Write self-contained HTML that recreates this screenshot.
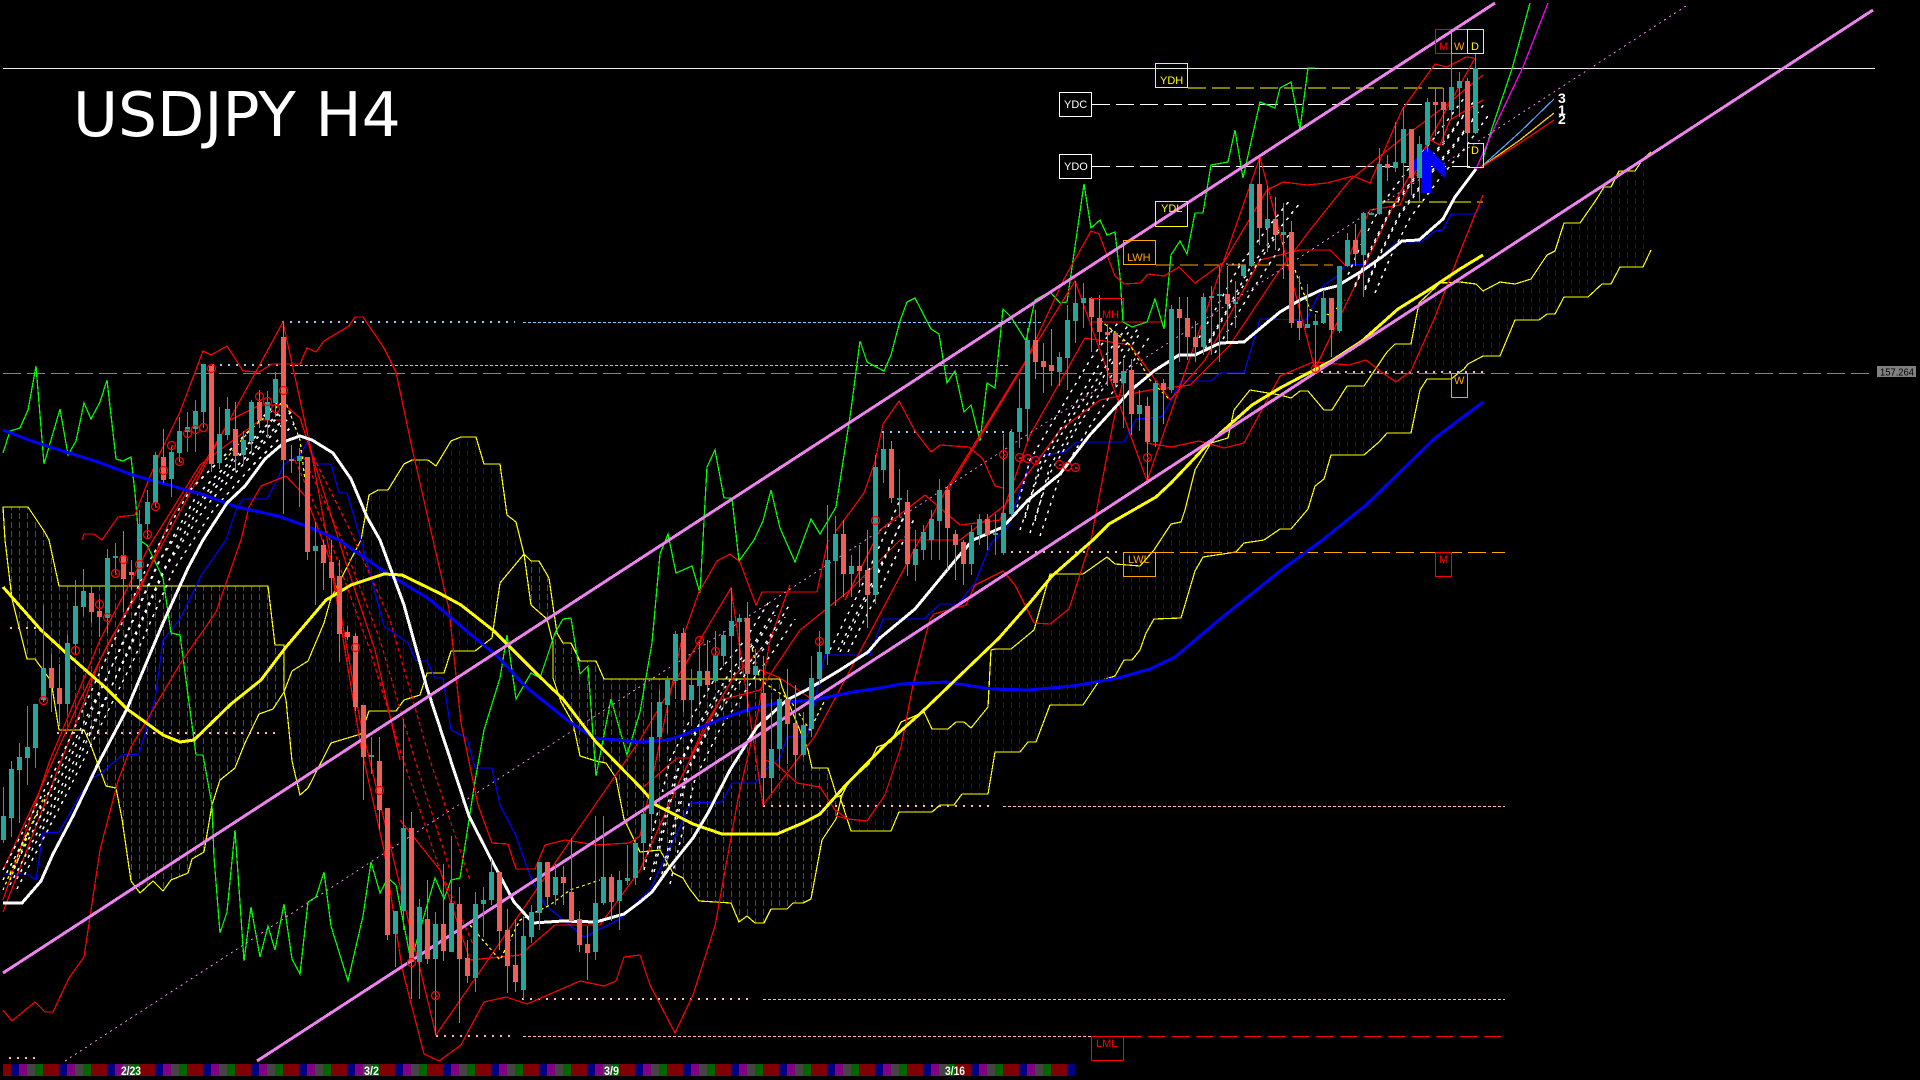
<!DOCTYPE html>
<html><head><meta charset="utf-8"><title>USDJPY H4</title>
<style>
html,body{margin:0;padding:0;background:#000;width:1920px;height:1080px;overflow:hidden}
svg{display:block;position:absolute;left:0;top:0}
polyline,line,path,polygon,rect{shape-rendering:crispEdges}
text{font-family:"Liberation Sans",sans-serif}
.t{fill:none}
</style></head><body>
<svg width="1920" height="1080" viewBox="0 0 1920 1080" xmlns="http://www.w3.org/2000/svg">
<defs>
<pattern id="hr" x="0" y="0" width="8" height="9" patternUnits="userSpaceOnUse"><rect x="3" y="0" width="1" height="6" fill="#f00"/></pattern>
<pattern id="hb" x="0" y="0" width="8" height="9" patternUnits="userSpaceOnUse"><rect x="3" y="0" width="1" height="6" fill="#00f"/></pattern>
</defs>
<rect width="1920" height="1080" fill="#000"/>

<!-- clouds -->
<g stroke="#ff0" stroke-width="1.2">
<polygon fill="url(#hr)" points="3,507 28,507 44,531 49,540 59,586 268,586 275,645 284,645 284,692 273,709 259,714 245,743 235,768 220,780 212,805 204,852 192,859 188,873 171,880 163,891 153,881 140,893 131,881 122,819 116,788 106,786 90,743 84,730 59,730 51,681 35,659 27,659 12,599 5,540"/>
<polygon fill="url(#hb)" points="284,692 292,671 308,661 324,623 331,598 361,540 369,495 378,490 388,490 404,464 412,460 428,460 436,466 451,441 461,437 476,437 484,464 500,464 507,515 516,522 524,554 500,583 492,638 475,651 451,651 444,673 427,673 420,695 404,700 396,711 369,711 361,734 331,743 308,788 300,795 292,761 286,700"/>
<polygon fill="url(#hr)" points="524,554 531,561 539,561 549,578 553,606 557,633 563,643 571,643 580,661 596,661 604,679 780,679 782,687 808,750 812,768 828,768 837,797 842,795 836,819 822,840 811,899 803,903 793,903 787,909 771,909 764,923 755,923 747,916 739,922 731,903 699,901 689,888 683,878 673,873 660,850 640,852 624,819 616,778 606,763 596,761 580,756 573,723 561,702 553,678 553,643 547,619 531,605"/>
<polygon fill="url(#hb)" stroke="none" points="842,795 848,783 869,764 877,747 891,742 901,722 924,712 932,729 948,729 956,722 964,722 971,728 988,707 991,650 995,649 1011,649 1034,630 1050,574 1083,574 1107,557 1115,564 1140,566 1154,550 1171,524 1181,522 1185,510 1195,470 1211,443 1228,438 1234,410 1250,390 1280,395 1291,398 1300,391 1308,391 1324,410 1332,410 1347,386 1364,386 1387,352 1395,344 1411,344 1419,303 1440,283 1460,282 1476,284 1483,291 1500,282 1515,284 1531,279 1547,255 1555,251 1564,223 1580,223 1596,200 1604,187 1611,187 1619,171 1635,171 1643,159 1651,152 1651,250 1643,267 1620,267 1611,284 1602,284 1588,297 1564,297 1555,314 1547,314 1539,320 1515,320 1500,356 1483,356 1468,364 1464,369 1451,379 1427,379 1420,390 1411,433 1387,433 1379,442 1364,455 1331,455 1324,479 1315,486 1308,509 1291,529 1280,529 1264,540 1244,543 1236,552 1203,557 1195,571 1181,618 1154,619 1146,633 1140,650 1132,660 1124,660 1115,676 1099,681 1083,705 1050,705 1036,742 1028,742 1020,752 995,752 988,794 962,794 954,805 940,805 932,812 899,812 891,831 851,831 840,797"/>
<polyline fill="none" points="1651,152 1643,159 1635,171 1619,171 1611,187 1604,187 1596,200 1580,223 1564,223 1555,251 1547,255 1531,279 1515,284 1500,282 1483,291 1476,284 1460,282 1440,283 1419,303 1411,344 1395,344 1387,352 1364,386 1347,386 1332,410 1324,410 1308,391 1300,391 1291,398 1280,395 1250,390 1234,410 1228,438 1211,443 1195,470 1185,510 1181,522 1171,524 1154,550 1140,566 1115,564 1107,557 1083,574 1050,574 1034,630 1011,649 995,649 991,650 988,707 971,728 964,722 956,722 948,729 932,729 924,712 901,722 891,742 877,747 869,764 848,783 842,795 840,797 851,831 891,831 899,812 932,812 940,805 954,805 962,794 988,794 995,752 1020,752 1028,742 1036,742 1050,705 1083,705 1099,681 1115,676 1124,660 1132,660 1140,650 1146,633 1154,619 1181,618 1195,571 1203,557 1236,552 1244,543 1264,540 1280,529 1291,529 1308,509 1315,486 1324,479 1331,455 1364,455 1379,442 1387,433 1411,433 1420,390 1427,379 1451,379 1464,369 1468,364 1483,356 1500,356 1515,320 1539,320 1547,314 1555,314 1564,297 1588,297 1602,284 1611,284 1620,267 1643,267 1651,250"/>
</g>

<!-- horizontal levels -->
<g class="t" fill="none">
<line x1="3" y1="68.5" x2="1875" y2="68.5" stroke="#e8e8e8"/>
<line x1="3" y1="373.5" x2="1870" y2="373.5" stroke="#808080" stroke-dasharray="18 6"/>
<g stroke="#87cefa">
<line x1="282" y1="322" x2="515" y2="322" stroke-width="2" stroke-dasharray="2 6"/>
<line x1="523" y1="322.5" x2="1044" y2="322.5" stroke-dasharray="3 2"/>
<line x1="204" y1="365" x2="285" y2="365" stroke-width="2" stroke-dasharray="2 6"/>
<line x1="290" y1="365.5" x2="1010" y2="365.5" stroke-dasharray="3 2"/>
<line x1="882" y1="432" x2="1012" y2="432" stroke-width="2" stroke-dasharray="2 6"/>
<line x1="1220" y1="264" x2="1243" y2="264" stroke-dasharray="2 4"/>
</g>
<g stroke="#ffb6c1">
<line x1="436" y1="1036" x2="515" y2="1036" stroke-width="2" stroke-dasharray="2 6"/>
<line x1="523" y1="1036.5" x2="1091" y2="1036.5" stroke-dasharray="3 2"/>
<line x1="522" y1="999" x2="754" y2="999" stroke-width="2" stroke-dasharray="2 6"/>
<line x1="763" y1="999.5" x2="1505" y2="999.5" stroke-dasharray="3 2"/>
<line x1="763" y1="806" x2="995" y2="806" stroke-width="2" stroke-dasharray="2 6"/>
<line x1="1003" y1="806.5" x2="1505" y2="806.5" stroke-dasharray="3 2"/>
<line x1="1003" y1="552" x2="1123" y2="552" stroke-width="2" stroke-dasharray="2 6"/>
<line x1="57" y1="733" x2="275" y2="733" stroke-width="2" stroke-dasharray="2 6"/>
<line x1="9" y1="1058" x2="35" y2="1058" stroke-width="2" stroke-dasharray="2 6"/>
<line x1="10" y1="628" x2="37" y2="628" stroke-width="2" stroke-dasharray="2 6"/>
<line x1="1313" y1="372" x2="1484" y2="372" stroke-width="2" stroke-dasharray="2 6"/>
</g>
<line x1="1188" y1="88" x2="1443" y2="88" stroke="#ff0" stroke-dasharray="18 6"/>
<line x1="1092" y1="104.5" x2="1427" y2="104.5" stroke="#fff" stroke-dasharray="18 6"/>
<line x1="1092" y1="166.5" x2="1475" y2="166.5" stroke="#fff" stroke-dasharray="18 6"/>
<line x1="1381" y1="202" x2="1483" y2="202" stroke="#ff0" stroke-dasharray="18 6"/>
<line x1="1156" y1="265" x2="1333" y2="265" stroke="#ffa500" stroke-dasharray="18 6"/>
<line x1="1156" y1="552.5" x2="1505" y2="552.5" stroke="#ffa500" stroke-dasharray="18 6"/>
<line x1="1124" y1="1036.5" x2="1505" y2="1036.5" stroke="#f00" stroke-dasharray="18 6"/>
<line x1="1091" y1="322" x2="1162" y2="322" stroke="#f00"/>
</g>

<!-- thin indicators -->
<g fill="none" stroke-width="1.25">
<polyline stroke="#00f" points="3,874 27,874 36,880 43,833 59,832 82,792 92,778 100,774 122,755 139,754 155,700 163,640 180,619 202,574 226,540 236,510 243,499 267,499 278,478 284,464 300,455 308,441 316,464 331,464 339,493 347,493 361,540 384,626 408,643 416,661 427,661 435,678 443,678 451,730 467,738 475,768 492,768 500,805 516,836 531,878 545,905 584,937 620,919 650,890 683,820 690,803 722,802 732,783 755,783 765,770 780,758 787,737 807,737 825,655 870,655 883,619 924,619 940,604 958,604 975,583 991,543 1007,528 1032,457 1064,452 1077,442 1124,442 1136,419 1162,417 1181,381 1211,381 1220,373 1244,373 1260,319 1306,320 1323,286 1337,276 1345,265 1374,264 1396,242 1421,242 1435,231 1443,230 1451,214 1474,214 1483,205"/>
<polyline stroke="#0f0" points="3,453 10,431 20,428 28,410 36,366 44,464 60,409 68,455 76,441 84,403 91,419 100,402 107,380 116,459 123,461 131,457 135,493 139,540 147,545 163,578 171,633 180,635 196,755 203,755 212,805 214,857 220,933 227,912 235,830 244,961 251,907 260,957 268,926 275,950 284,904 292,959 300,974 308,902 316,897 324,872 331,926 348,981 363,916 371,862 380,893 388,878 396,885 411,961 435,878 444,899 451,880 460,878 475,781 484,730 500,678 507,635 516,699 531,673 540,678 555,633 563,619 571,618 580,674 588,666 596,776 611,699 627,755 640,712 652,643 660,554 668,534 676,573 692,566 700,593 707,467 715,450 724,498 732,498 739,561 754,540 763,521 771,490 780,528 795,562 811,519 820,534 836,507 851,410 860,341 867,362 884,371 891,355 900,321 907,302 915,298 931,329 939,334 947,383 955,371 964,412 971,405 980,441 987,383 995,388 1003,309 1011,317 1026,341 1035,300 1044,295 1051,293 1060,303 1067,302 1084,184 1091,228 1100,220 1107,235 1115,232 1120,276 1123,322 1132,327 1147,322 1155,299 1164,329 1171,255 1180,241 1187,254 1195,213 1203,213 1211,165 1228,162 1235,130 1243,178 1260,102 1275,108 1280,88 1291,82 1300,129 1308,68 1315,68"/>
<polyline stroke="#0f0" points="1483,159 1492,128 1512,69 1530,3"/>
<polyline stroke="#f0f" points="1476,169 1496,124 1523,67 1548,3"/>
<polyline stroke="#f00" points="82,540 84,534 94,534 102,540 118,517 135,515 149,479 159,455 180,412 203,351 211,355 227,346 243,371 259,372 272,364 300,364 307,348 316,352 324,341 349,326 355,317 363,317 384,348 396,372 412,448 433,540 449,609 461,723 478,805 492,843 508,844 516,869 535,869 545,845 565,840 596,845 629,843 640,836"/>
<polyline stroke="#f00" points="3,1010 12,1021 35,1002 45,1012 53,1012 69,978 84,957 100,850 118,781 131,747 180,664 216,612 241,540 249,507 261,486 286,476 306,497 330,560 361,747 384,850 402,968 424,1054 439,1061 461,1045 484,1002 506,997 527,1004 580,981 604,986 616,981 624,957 640,955 650,985 675,1033 693,995 715,926 738,799 758,712 770,640 790,585"/>
<polyline stroke="#f00" points="836,531 864,493 875,462 883,424 899,401 915,431 931,452 940,445 969,447 983,459 995,486 1003,488"/>
<polyline stroke="#f00" points="640,836 681,643 699,592 717,561 730,554 740,562 756,605 762,592 783,592 817,592 828,540"/>
<polyline stroke="#f00" points="836,816 848,819 867,821 885,795 901,747 913,685 930,619 934,614 966,605 975,585 1003,571 1015,585 1034,623 1050,624 1069,609 1091,540 1113,424 1124,376"/>
<polyline stroke="#f00" points="948,490 1024,365 1064,279 1091,231 1099,234 1115,276 1124,284 1140,283 1148,274 1164,276 1179,267 1195,283 1224,262 1267,190 1283,182 1307,185 1327,183 1353,176 1370,183 1402,110 1435,64 1447,67 1466,57 1474,58"/>
<polyline stroke="#f00" points="1146,443 1171,447 1199,441 1224,448 1244,443 1280,376 1313,362 1349,365 1366,360 1380,371 1396,382 1411,371 1435,317 1460,252 1483,195"/>
<polyline stroke="#f00" points="3,912 100,660 229,421 283,322 311,450 360,720 436,1035 640,740 731,588 763,805 815,736 946,490 1075,281 1147,481 1260,157 1315,369 1396,200 1475,58"/>
<polyline stroke="#f00" points="756,668 780,678 813,700"/>
<polyline stroke="#f00" points="764,760 775,763 797,783 820,787 835,810 848,819"/>
<polyline stroke="#f00" points="640,790 677,758 690,758 705,725 735,675 760,650"/>
<!-- tenkan / ribbons -->
<polyline stroke="#f00" points="3,870 40,790 80,700 110,640 140,590 170,520 200,470 230,420 260,405 285,405 300,418 320,480 345,560 375,650 400,760"/>
<polyline stroke="#f00" points="3,900 50,760 100,640 150,545 200,465 260,420 285,420"/>
<polyline stroke="#f00" points="400,820 440,870 470,960 520,955 555,925 600,925 640,870 680,780 720,700 760,690 800,630 850,590 900,540 960,540 1005,505 1060,430 1100,400 1150,390 1190,385 1230,345 1280,270 1310,230 1350,180 1400,140 1440,110 1483,75"/>
<polyline stroke="#f00" points="845,600 880,530 925,495 960,525 1000,520 1030,435 1085,338 1130,345 1170,400 1205,360 1260,260 1300,250 1330,250 1345,265 1370,210 1400,205 1430,140 1440,145 1450,120 1483,100"/>
<g stroke="#f00" stroke-dasharray="4 3">
<polyline points="295,460 330,540 370,650 400,750 440,870 480,960"/>
<polyline points="300,450 340,535 380,640 415,760 450,870"/>
<polyline points="310,450 350,530 390,620 430,760 470,880"/>
</g>
<g stroke="#fff" stroke-dasharray="3 5" stroke-width="1.5">
<g id="rb1">
<polyline points="3,870 60,760 110,650 150,560 190,490 240,440 280,400"/>
<polyline points="3,880 50,790 80,730 120,650 160,560 200,500 240,455 280,415"/>
</g>
<use href="#rb1" transform="translate(7,5)"/>
<use href="#rb1" transform="translate(14,9)"/>
<g id="rb2">
<polyline points="644,870 670,760 690,720 720,670 745,640 770,600"/>
<polyline points="650,880 675,775 700,725 730,680 755,645 775,615"/>
</g>
<use href="#rb2" transform="translate(10,2)"/>
<use href="#rb2" transform="translate(20,4)"/>
<g id="rb3">
<polyline points="830,650 860,590 880,545 900,500"/>
<polyline points="838,650 866,595 888,550 905,515"/>
</g>
<use href="#rb3" transform="translate(10,2)"/>
<g id="rb4">
<polyline points="1015,515 1030,460 1060,410 1090,360 1120,320"/>
<polyline points="1020,530 1040,470 1070,420 1100,375 1130,330"/>
</g>
<use href="#rb4" transform="translate(10,3)"/>
<use href="#rb4" transform="translate(20,6)"/>
<g id="rb5">
<polyline points="1195,345 1215,310 1240,265 1270,225 1290,200"/>
<polyline points="1205,350 1225,315 1250,275 1280,230"/>
</g>
<use href="#rb5" transform="translate(10,3)"/>
<g id="rb6">
<polyline points="1355,285 1370,250 1390,210 1420,170 1445,140 1475,100"/>
<polyline points="1365,290 1380,255 1400,215 1430,175 1455,145 1480,110"/>
</g>
<use href="#rb6" transform="translate(10,3)"/>
<use href="#rb6" transform="translate(-10,-3)"/>
</g>
<g stroke="#ff0" stroke-dasharray="3 3">
<polyline points="3,890 20,850 45,795"/>
<polyline points="10,880 30,830"/>
<polyline points="225,460 250,430 285,400 300,440 305,480"/>
<polyline points="470,925 500,960 520,920 550,905 570,890 600,880"/>
<polyline points="745,620 760,680 790,700 810,730 825,700"/>
<polyline points="1100,320 1130,345 1150,380 1170,400"/>
<polyline points="1295,270 1310,310 1330,315 1345,300"/>
</g>
<polyline stroke="#4da6ff" points="1480,168 1520,132 1554,99"/>
<polyline stroke="#ffd700" points="1480,168 1520,140 1554,113"/>
<polyline stroke="#f00" points="1480,168 1520,143 1554,120"/>
</g>

<!-- thick -->
<g fill="none">
<line x1="65" y1="1061" x2="1686" y2="6" stroke="#ee82ee" stroke-dasharray="2 4"/>
<polyline stroke="#00f" stroke-width="3" points="3,430 29,440 53,448 98,462 133,475 204,495 237,507 278,516 306,526 339,540 388,574 429,599 469,633 496,655 527,688 571,723 594,738 640,742 668,740 683,735 723,718 753,708 777,703 813,700 853,692 880,688 901,684 946,682 991,689 1028,690 1073,686 1118,678 1150,669 1175,657 1220,619 1280,571 1321,541 1366,505 1435,438 1483,402"/>
<polyline stroke="#ff0" stroke-width="3" points="3,587 41,630 65,652 106,688 127,709 163,735 180,742 194,740 231,704 261,680 286,647 326,600 351,585 384,574 402,575 439,593 461,605 494,631 539,676 563,699 596,742 640,787 656,805 693,824 722,834 777,834 803,823 820,814 844,787 885,745 922,712 999,638 1028,605 1052,576 1093,540 1109,524 1156,497 1171,483 1207,445 1252,405 1280,388 1333,360 1362,341 1398,309 1427,291 1460,269 1483,255"/>
<polyline stroke="#fff" stroke-width="3" points="3,903 22,903 41,881 53,854 73,816 98,764 127,709 163,623 188,568 203,540 227,503 245,486 265,459 286,441 300,436 312,440 333,453 351,479 367,517 380,540 404,605 427,688 445,743 469,816 492,861 514,902 533,923 563,921 596,922 624,914 640,902 652,892 669,868 693,838 708,813 730,770 757,727 787,700 810,688 840,670 868,652 880,638 915,609 958,557 973,540 1003,527 1028,500 1060,474 1089,436 1130,391 1154,371 1179,355 1195,355 1220,343 1244,342 1280,312 1300,300 1321,290 1337,286 1362,271 1382,257 1402,241 1419,240 1443,219 1455,197 1476,169"/>
<line x1="3" y1="973" x2="1495" y2="3" stroke="#ee82ee" stroke-width="3"/>
<line x1="257" y1="1061" x2="1873" y2="10" stroke="#ee82ee" stroke-width="3"/>
</g>
<polygon fill="#00f" points="1427,147 1445,165 1445,178 1431,165 1431,193 1421,193 1421,165 1409,178 1409,165"/>

<!-- candles -->
<g transform="translate(-.5 0)" fill="none">
<path stroke="#26a69a" stroke-width="1" d="M4 787V843M12 761V837M20 743V823M28 706V785M36 704V768M44 605V702M68 635V712M76 580V654M84 569V616M108 549V633M116 543V574M140 510V590M148 490V538M156 452V507M172 445V497M180 417V462M188 412V452M196 400V452M204 364V428M220 407V469M228 397V440M244 431V464M252 400V453M268 391V438M276 372V417M300 448V507M316 522V605M372 737V774M396 911V967M404 719V930M420 899V999M436 912V1035M452 836V952M476 892V992M484 887V937M492 859V905M524 916V999M532 905V943M540 862V930M556 864V905M596 816V960M604 816V905M620 871V930M628 845V885M636 840V885M644 810V868M652 702V830M660 690V757M668 676V733M676 631V699M692 669V726M700 640V702M716 631V683M724 631V666M732 588V678M740 614V671M756 649V688M772 699V793M780 697V768M804 712V757M812 656V737M820 631V685M828 505V665M836 516V606M852 555V597M876 455V604M884 433V483M900 469V517M916 530V581M924 525V560M932 510V560M940 479V560M972 525V575M980 514V545M996 514V555M1004 434V555M1012 429V517M1020 379V448M1028 328V441M1060 352V386M1068 305V390M1076 281V343M1084 283V328M1124 359V428M1140 390V431M1156 381V447M1172 305V393M1204 293V355M1212 286V355M1220 266V362M1236 281V328M1244 265V278M1252 184V267M1268 186V252M1284 203V279M1308 284V328M1316 314V372M1324 290V324M1340 266V333M1348 233V267M1364 212V297M1372 212V215M1380 148V215M1396 122V172M1404 107V188M1420 136V202M1428 98V152M1452 45V119M1460 72V117M1476 53V134"/>
<path stroke="#ef5f58" stroke-width="1" d="M52 654V712M60 664V726M92 585V623M100 599V637M124 531V612M132 560V590M164 429V483M212 366V472M236 402V472M260 390V428M284 322V514M292 445V473M308 457V560M324 540V590M332 540V595M340 560V662M348 626V640M356 633V711M364 705V800M380 737V830M388 808V940M412 812V999M428 880V964M444 864V961M460 887V1023M468 940V983M500 871V950M508 909V993M516 919V992M548 862V905M564 866V905M572 838V921M580 911V952M588 926V980M612 874V921M684 628V712M708 640V692M748 602V712M764 656V806M788 669V764M796 685V778M844 520V597M860 545V587M868 530V628M892 441V503M908 490V576M948 486V570M956 530V580M964 540V585M988 514V550M1036 310V379M1044 343V393M1052 329V386M1092 297V352M1100 295V345M1108 324V386M1116 331V386M1132 359V435M1148 397V481M1164 379V424M1180 297V362M1188 297V360M1196 321V362M1228 266V341M1260 158V245M1276 197V250M1292 221V328M1300 276V340M1332 298V357M1356 224V266M1388 155V181M1412 129V195M1436 88V136M1444 88V145M1468 78V143"/>
<path stroke="#26a69a" stroke-width="5" d="M4 816V840M12 769V818M20 757V770M28 747V758M36 704V748M44 668V700M68 643V704M76 606V644M84 591V607M108 558V618M116 556V558M140 524V579M148 502V524M156 455V503M172 452V479M180 431V453M188 427V432M196 411V429M204 364V412M220 434V463M228 409V435M244 440V455M252 402V441M268 402V420M276 379V403M300 456V461M316 546V551M372 755V757M396 911V934M404 828V911M420 907V962M436 924V959M452 903V952M476 904V978M484 900V904M492 872V900M524 936V990M532 912V937M540 862V913M556 877V895M596 903V952M604 877V903M620 880V901M628 878V881M636 843V878M644 814V843M652 737V814M660 702V737M668 680V705M676 634V681M692 685V700M700 671V686M716 655V681M724 635V656M732 621V636M740 618V622M756 666V675M772 749V778M780 699V749M804 725V755M812 678V729M820 652V679M828 560V654M836 534V561M852 566V574M876 467V595M884 449V470M900 498V500M916 549V565M924 532V550M932 519V540M940 490V521M972 532V564M980 519V535M996 533V535M1004 513V553M1012 432V514M1020 408V432M1028 340V409M1060 357V372M1068 320V358M1076 303V321M1084 298V303M1124 371V383M1140 405V414M1156 383V442M1172 309V390M1204 297V347M1212 296V298M1220 294V296M1236 302V304M1244 265V276M1252 184V266M1268 219V228M1284 232V235M1308 324V328M1316 321V325M1324 298V323M1340 266V331M1348 240V266M1364 213V255M1372 213V215M1380 164V214M1396 162V168M1404 129V163M1420 144V178M1428 102V145M1452 87V110M1460 81V88M1476 68V133"/>
<path stroke="#ef5f58" stroke-width="5" d="M52 668V688M60 688V704M92 593V612M100 611V617M124 555V579M132 572V575M164 457V480M212 366V464M236 429V456M260 402V420M284 337V460M292 459V461M308 457V552M324 545V563M332 562V578M340 576V634M348 632V637M356 636V707M364 705V757M380 761V810M388 808V935M412 828V962M428 919V959M444 924V951M460 904V959M468 958V976M500 872V931M508 930V966M516 965V982M548 862V897M564 877V883M572 892V921M580 919V945M588 944V953M612 877V902M684 633V700M708 671V685M748 618V674M764 693V778M788 699V724M796 723V755M844 534V574M860 566V571M868 570V595M892 449V498M908 502V564M948 490V528M956 534V545M964 542V564M988 519V535M1036 340V362M1044 361V367M1052 365V371M1092 298V317M1100 318V332M1108 332V335M1116 333V383M1132 370V414M1148 406V442M1164 383V390M1180 309V318M1188 318V337M1196 337V347M1228 294V304M1260 184V228M1276 219V235M1292 232V323M1300 321V328M1332 298V330M1356 240V254M1388 164V168M1412 129V178M1436 102V105M1444 102V110M1468 81V133"/>
</g>

<!-- circles -->
<g fill="#f00" stroke="none"><path d="M147 534h2v2h-2zM155 506h2v2h-2zM171 445h2v2h-2zM180 461h2v2h-2zM44 700h1v1h-1zM115 573h2v2h-2zM1003 454h2v2h-2zM1019 457h2v2h-2zM1027 458h2v2h-2zM1035 460h2v2h-2zM1059 464h2v2h-2zM1075 467h2v2h-2zM1147 457h2v2h-2zM699 640h2v2h-2zM715 651h2v2h-2zM819 641h2v2h-2zM435 995h2v2h-2z"/></g>
<g fill="none" stroke="#f00" stroke-width="1.2">
<circle cx="147.5" cy="534.5" r="4"/><circle cx="155.5" cy="506.5" r="4"/><circle cx="163.5" cy="470.5" r="4"/><circle cx="171.5" cy="445.5" r="4"/><circle cx="179.5" cy="461.5" r="4"/><circle cx="187.5" cy="433.5" r="4"/><circle cx="195.5" cy="429.5" r="4"/><circle cx="203.5" cy="427.5" r="4"/><circle cx="211.5" cy="368.5" r="4"/><circle cx="259.5" cy="396.5" r="4"/><circle cx="267.5" cy="401.5" r="4"/><circle cx="275.5" cy="408.5" r="4"/><circle cx="283.5" cy="390.5" r="4"/>
<circle cx="43.5" cy="700.5" r="4"/><circle cx="75.5" cy="650.5" r="4"/><circle cx="99.5" cy="604.5" r="4"/><circle cx="107.5" cy="617.5" r="4"/><circle cx="115.5" cy="573.5" r="4"/><circle cx="123.5" cy="559.5" r="4"/><circle cx="139.5" cy="564.5" r="4"/><circle cx="355.5" cy="647.5" r="4"/><circle cx="379.5" cy="790.5" r="4"/><circle cx="411.5" cy="962.5" r="4"/><circle cx="435.5" cy="995.5" r="4"/>
<circle cx="1003.5" cy="454.5" r="4"/><circle cx="1019.5" cy="457.5" r="4"/><circle cx="1027.5" cy="458.5" r="4"/><circle cx="1035.5" cy="460.5" r="4"/><circle cx="1059.5" cy="464.5" r="4"/><circle cx="1067.5" cy="466.5" r="4"/><circle cx="1075.5" cy="467.5" r="4"/><circle cx="1147.5" cy="457.5" r="4"/><circle cx="875.5" cy="520.5" r="4"/><circle cx="699.5" cy="640.5" r="4"/><circle cx="715.5" cy="651.5" r="4"/><circle cx="819.5" cy="641.5" r="4"/><circle cx="1315.5" cy="368.5" r="4"/>
</g>

<!-- label boxes -->
<g fill="none" stroke-width="1">
<rect x="1155.5" y="63.5" width="32" height="24" stroke="#ff0"/>
<rect x="1059.5" y="92.5" width="32" height="24" stroke="#fff"/>
<rect x="1059.5" y="154.5" width="32" height="24" stroke="#fff"/>
<rect x="1155.5" y="201.5" width="32" height="25" stroke="#ff0"/>
<rect x="1123.5" y="240.5" width="32" height="24" stroke="#ffa500"/>
<path d="M1091 298.5H1123.5V322" stroke="#f00"/>
<rect x="1435.5" y="29.5" width="16" height="24" stroke="#f00"/>
<rect x="1451.5" y="29.5" width="16" height="24" stroke="#ffa500"/>
<rect x="1467.5" y="29.5" width="16" height="24" stroke="#ff0"/>
<rect x="1467.5" y="143.5" width="16" height="24" stroke="#ff0"/>
<rect x="1451.5" y="373.5" width="16" height="24" stroke="#ffa500"/>
<rect x="1123.5" y="552.5" width="32" height="24" stroke="#ffa500"/>
<rect x="1435.5" y="552.5" width="16" height="24" stroke="#f00"/>
<rect x="1091.5" y="1036.5" width="32" height="24" stroke="#f00"/>
</g>
<g font-size="11">
<text x="1160" y="84" fill="#ff0">YDH</text>
<text x="1064" y="108" fill="#fff">YDC</text>
<text x="1064" y="170" fill="#fff">YDO</text>
<text x="1161" y="212" fill="#ff0">YDL</text>
<text x="1127" y="261" fill="#ffa500">LWH</text>
<text x="1102" y="318" fill="#f00">MH</text>
<text x="1439" y="50" fill="#f00">M</text>
<text x="1454" y="50" fill="#ffa500">W</text>
<text x="1471" y="50" fill="#ff0">D</text>
<text x="1471" y="154" fill="#ff0">D</text>
<text x="1454" y="384" fill="#ffa500">W</text>
<text x="1128" y="563" fill="#ffa500">LWL</text>
<text x="1439" y="563" fill="#f00">M</text>
<text x="1096" y="1047" fill="#f00">LML</text>
</g>
<g font-size="14" fill="#fff" font-weight="bold">
<text x="1558" y="103">3</text>
<text x="1558" y="115">1</text>
<text x="1558" y="124">2</text>
</g>

<!-- title -->
<text x="73" y="136" font-size="61.5" fill="#fff" style="font-family:'DejaVu Sans',sans-serif">USDJPY H4</text>

<!-- price tag -->
<rect x="1877" y="366" width="39" height="11" fill="#808080"/>
<text x="1880" y="375.5" font-size="10" fill="#000" textLength="34" lengthAdjust="spacingAndGlyphs">157.264</text>
</svg>

<!-- time strip -->
<div style="position:absolute;left:3px;top:1064px;width:1072px;height:12px;background:repeating-linear-gradient(90deg,#800000 0 8px,#000080 8px 16px,#800080 16px 24px,#444 24px 32px,#006400 32px 40px,#800000 40px 48px)"></div>
<svg width="1920" height="1080" viewBox="0 0 1920 1080" style="pointer-events:none">
<g fill="#fff" font-size="12" font-weight="bold">
<text x="121" y="1075" textLength="20" lengthAdjust="spacingAndGlyphs">2/23</text>
<text x="364" y="1075" textLength="15" lengthAdjust="spacingAndGlyphs">3/2</text>
<text x="604" y="1075" textLength="15" lengthAdjust="spacingAndGlyphs">3/9</text>
<text x="945" y="1075" textLength="20" lengthAdjust="spacingAndGlyphs">3/16</text>
</g>
</svg>
</body></html>
